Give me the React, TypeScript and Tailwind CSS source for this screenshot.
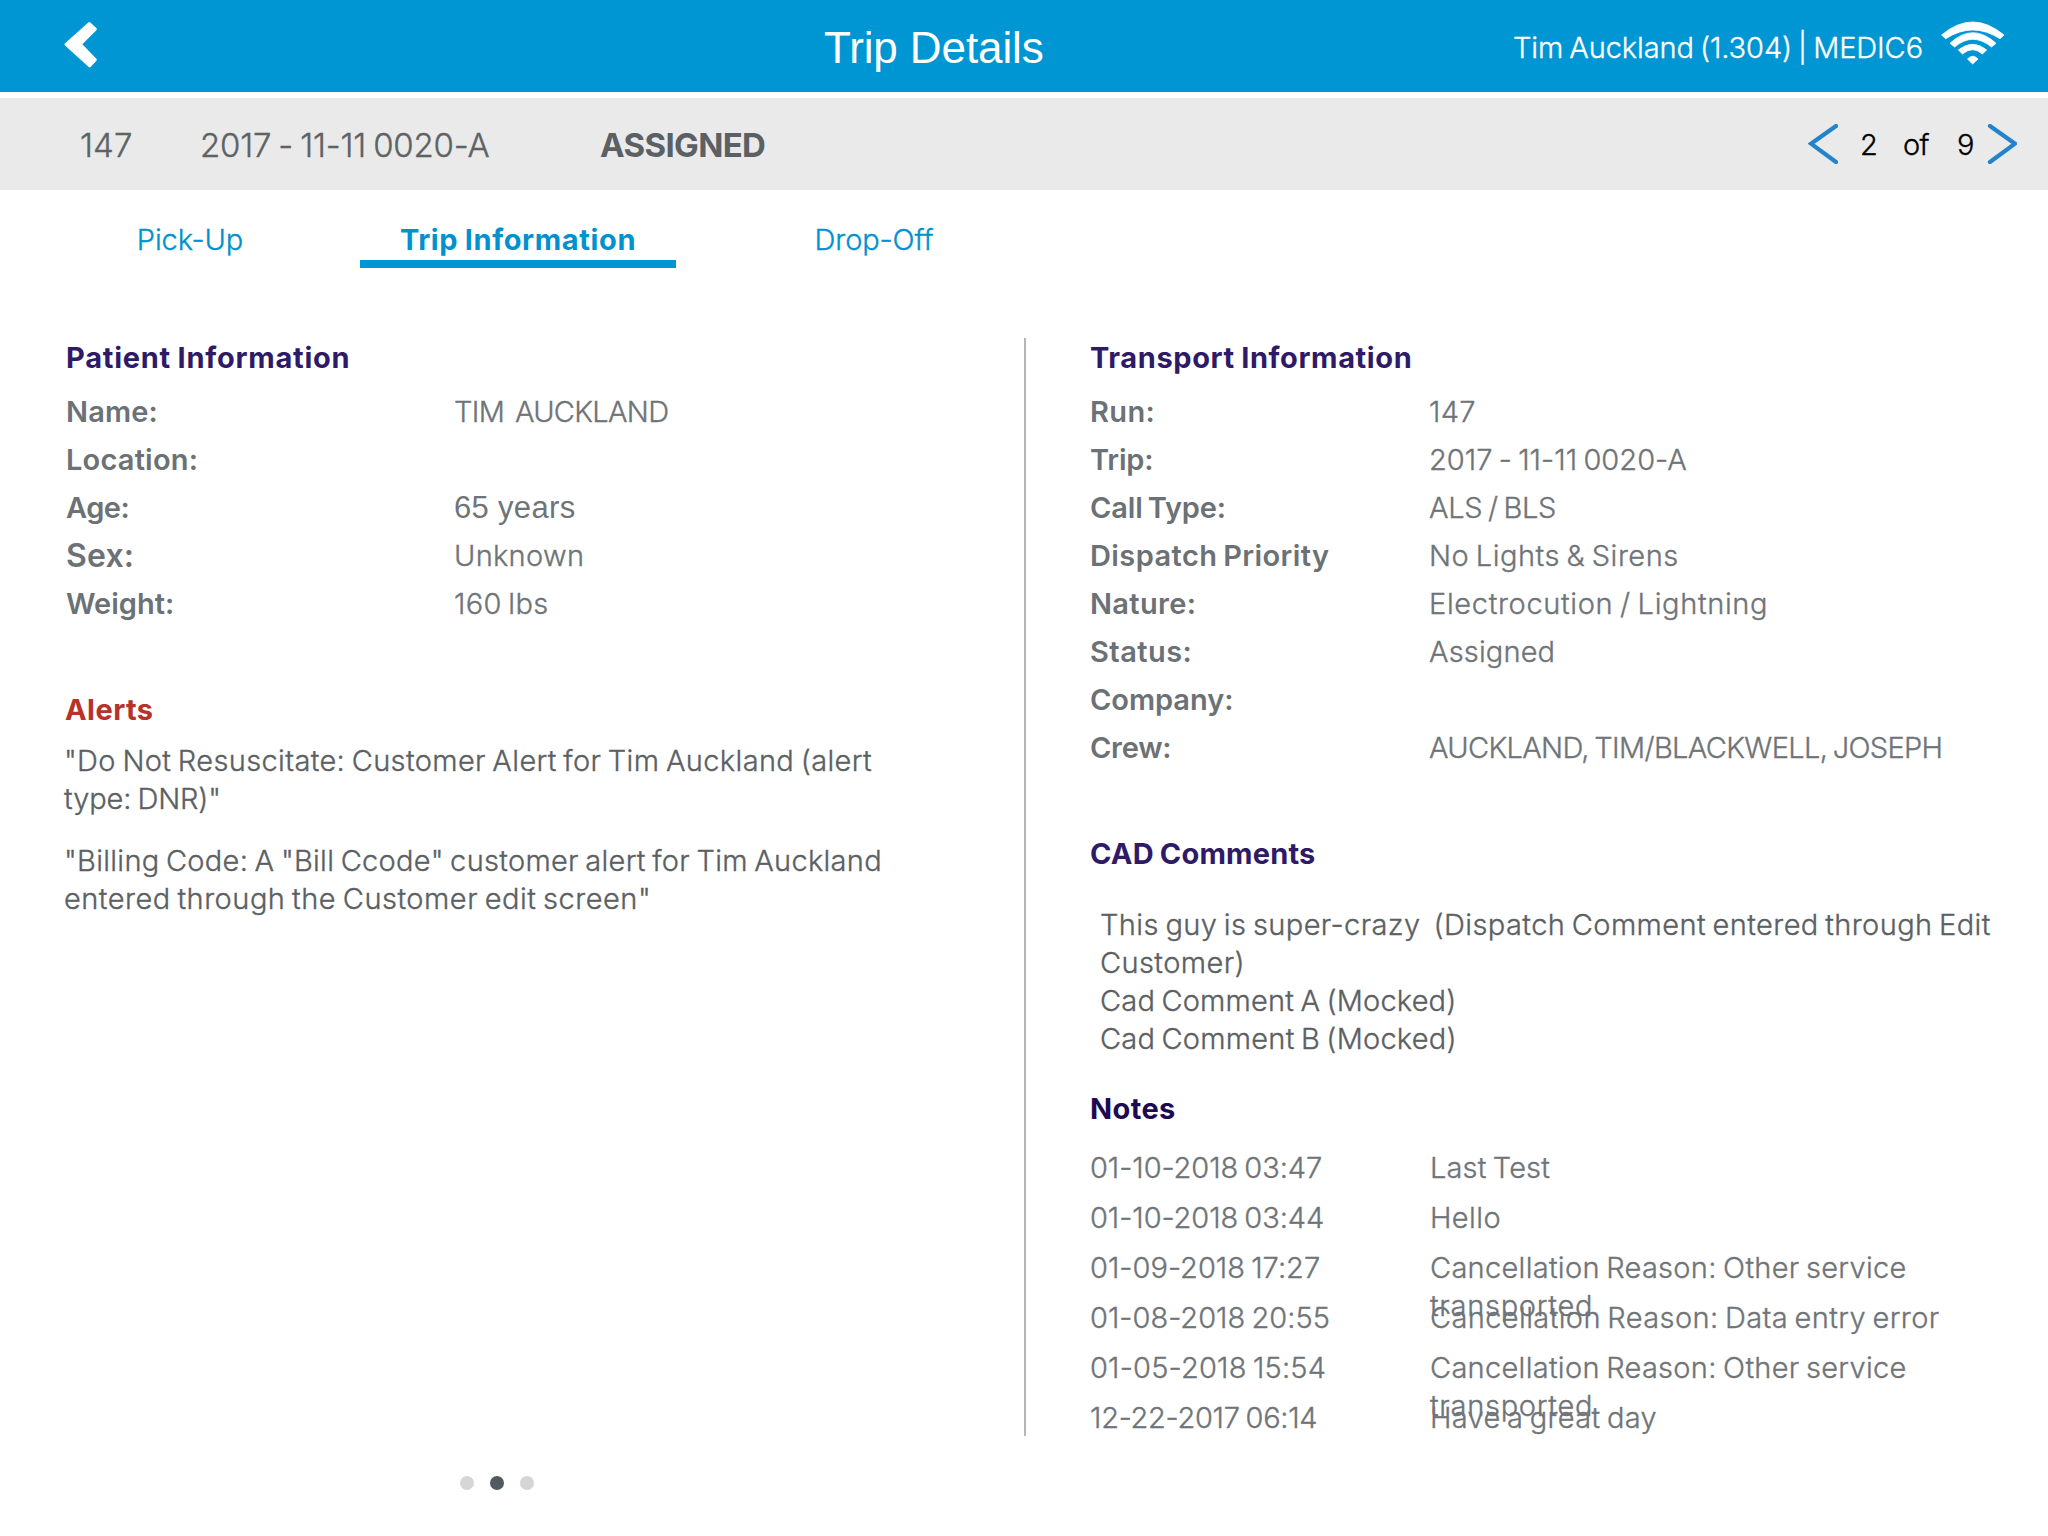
import React from "react";

type Item = { label: string; value?: string; labelClass?: string; valueClass?: string };

const patient: Item[] = [
  { label: "Name:", value: "TIM  AUCKLAND", labelClass: "tracking-[0.15px]", valueClass: "tracking-[-0.7px]" },
  { label: "Location:", labelClass: "tracking-[0.2px]" },
  {
    label: "Age:",
    value: "65 years",
    labelClass: "tracking-[-0.48px]",
    valueClass:
      "font-['Liberation_Sans',sans-serif] text-[31px] font-normal tracking-[0.32px] [word-spacing:0px] [-webkit-text-stroke:0px]",
  },
  { label: "Sex:", value: "Unknown", labelClass: "text-[32px] tracking-[0.2px]", valueClass: "tracking-[0.3px]" },
  { label: "Weight:", value: "160 lbs", valueClass: "tracking-[0.35px]" },
];

const transport: Item[] = [
  { label: "Run:", value: "147", labelClass: "tracking-[0.4px]", valueClass: "tracking-[0.3px]" },
  { label: "Trip:", value: "2017 - 11-11 0020-A", labelClass: "tracking-[-0.2px]", valueClass: "tracking-[0.05px]" },
  { label: "Call Type:", value: "ALS / BLS", labelClass: "tracking-[-0.15px]", valueClass: "tracking-[-0.35px]" },
  { label: "Dispatch Priority", value: "No Lights & Sirens", labelClass: "tracking-[0.42px]", valueClass: "tracking-[0.5px]" },
  { label: "Nature:", value: "Electrocution / Lightning", labelClass: "tracking-[0.35px]", valueClass: "tracking-[0.65px]" },
  { label: "Status:", value: "Assigned", labelClass: "tracking-[0.45px]", valueClass: "tracking-[0.15px]" },
  { label: "Company:", labelClass: "tracking-[-0.05px]" },
  { label: "Crew:", value: "AUCKLAND, TIM/BLACKWELL, JOSEPH", labelClass: "tracking-[-0.25px]", valueClass: "tracking-[-0.67px]" },
];

const alerts = [
  {
    id: "dnr",
    text: "\"Do Not Resuscitate: Customer Alert for Tim Auckland (alert ",
    rest: "type: DNR)\"",
    textClass: "tracking-[0.36px]",
    restClass: "tracking-[-0.1px]",
  },
  {
    id: "billing",
    text: "\"Billing Code: A \"Bill Ccode\" customer alert for Tim Auckland ",
    rest: "entered through the Customer edit screen\"",
    textClass: "tracking-[0.29px]",
    restClass: "tracking-[0.5px]",
  },
];

const notes = [
  { date: "01-10-2018 03:47", text: "Last Test", dateClass: "tracking-[-0.06px]", textClass: "tracking-[0.15px]" },
  { date: "01-10-2018 03:44", text: "Hello", dateClass: "tracking-[-0.06px]", textClass: "tracking-[0.4px]" },
  {
    date: "01-09-2018 17:27",
    text: "Cancellation Reason: Other service ",
    rest: "transported",
    dateClass: "tracking-[0.02px]",
    textClass: "tracking-[0.29px]",
  },
  {
    date: "01-08-2018 20:55",
    text: "Cancellation Reason: Data entry error",
    dateClass: "tracking-[0.02px]",
    textClass: "tracking-[0.38px]",
  },
  {
    date: "01-05-2018 15:54",
    text: "Cancellation Reason: Other service ",
    rest: "transported",
    dateClass: "tracking-[0.2px]",
    textClass: "tracking-[0.29px]",
  },
  { date: "12-22-2017 06:14", text: "Have a great day", dateClass: "tracking-[-0.28px]", textClass: "tracking-[0.32px]" },
];

function BackIcon() {
  return (
    <svg className="ml-[63px] mt-[21px] h-[48px] w-[35px] shrink-0" viewBox="0 0 35 48">
      <path
        d="M26.3 2.5 L32.3 8.2 L17.3 23.3 L32.3 38.8 L26.7 44.8 L3 23.3 Z"
        fill="#fff"
        stroke="#fff"
        strokeWidth="3"
        strokeLinejoin="round"
      />
    </svg>
  );
}

function WifiIcon() {
  return (
    <svg
      className="mt-[21px] h-[44px] w-[64px] shrink-0 overflow-visible"
      viewBox="0 0 64 44"
      fill="#fff"
      stroke="#fff"
      strokeWidth=".8"
      strokeLinejoin="round"
    >
      <path d="M.5 14 Q31.7 -12 63 14 L59 17.7 Q31.7 .3 4.7 17.7 Z" />
      <path d="M9 22.3 Q31.7 1.1 55 22.3 L50.5 26 Q31.7 10.6 13.7 26 Z" />
      <path d="M17.3 29 Q31.7 17.6 45.7 29 L41.3 33 Q31.7 24.4 21.5 33 Z" />
      <path d="M26.5 38 Q31.7 32.5 37 38 L31.7 43 Z" />
    </svg>
  );
}

function PagerArrow({ points }: { points: string }) {
  return (
    <svg className="mt-[26px] h-[40px] w-[30px] shrink-0" viewBox="0 0 30 40">
      <polyline points={points} fill="none" stroke="#2384cc" strokeWidth="4.2" strokeLinecap="round" />
    </svg>
  );
}

function Heading({ children, className }: { children: React.ReactNode; className: string }) {
  return (
    <h2
      className={
        "text-[29px] font-bold leading-[35px] [-webkit-text-stroke:0px] [word-spacing:-1px] " + className
      }
    >
      {children}
    </h2>
  );
}

function Rows({ items, columns }: { items: Item[]; columns: string }) {
  return (
    <dl className="mt-[13px]">
      {items.map((item) => (
        <div key={item.label} className={"grid h-12 items-start whitespace-pre " + columns}>
          <dt
            className={
              "font-semibold leading-[47px] text-[#6b7175] [-webkit-text-stroke:0px] " + (item.labelClass ?? "")
            }
          >
            {item.label}
          </dt>
          <dd className={"leading-[47px] text-[#6f7478] " + (item.valueClass ?? "")}>{item.value}</dd>
        </div>
      ))}
    </dl>
  );
}

export default function App() {
  return (
    <div className="flex h-[1536px] w-[2048px] flex-col overflow-hidden bg-white font-[Inter,sans-serif] text-[29px] font-light [-webkit-text-stroke:0.35px] [word-spacing:-2px]">
      <header className="flex h-[92px] shrink-0 items-start bg-[#0096d3] text-white">
        <BackIcon />
        <h1 className="ml-[726px] mt-[23px] whitespace-nowrap font-['Liberation_Sans',sans-serif] text-[44px] font-normal leading-[49px] tracking-[-0.1px] [-webkit-text-stroke:0px] [word-spacing:0px]">
          Trip Details
        </h1>
        <div className="ml-auto mr-[43px] flex items-start">
          <span className="mr-[18px] mt-[30px] whitespace-nowrap leading-[35px] tracking-[-0.09px]">
            Tim Auckland (1.304) | MEDIC6
          </span>
          <WifiIcon />
        </div>
      </header>

      <section className="mt-[6px] flex h-[92px] shrink-0 items-start bg-[#eaeaea] text-[#5d6265]">
        <span className="ml-[80px] mt-[27px] w-[120px] text-[33px] leading-[40px] tracking-[0.1px]">147</span>
        <span className="mt-[27px] w-[400px] text-[33px] leading-[40px] tracking-[-0.2px]">2017 - 11-11 0020-A</span>
        <span className="mt-[27px] text-[33px] font-bold leading-[40px] tracking-[-0.65px] text-[#5a6064] [-webkit-text-stroke:0px]">
          ASSIGNED
        </span>
        <div className="ml-auto mr-[31px] flex items-start text-black">
          <PagerArrow points="28,2 3,19.7 28,38" />
          <span className="ml-[22px] mt-[29px] w-[43px] leading-[35px]">2</span>
          <span className="mt-[29px] w-[54px] leading-[35px] tracking-[-0.6px]">of</span>
          <span className="mt-[29px] w-[30px] leading-[35px]">9</span>
          <PagerArrow points="3,2 28,19.7 3,38" />
        </div>
      </section>

      <nav className="flex h-[148px] shrink-0 items-start pt-[32px] text-center leading-[35px] text-[#0091d0]">
        <span className="ml-[32px] w-[316px] tracking-[-0.1px]">Pick-Up</span>
        <span className="ml-[12px] w-[316px] border-b-8 border-[#0096d3] pb-[3px] font-bold tracking-[0.62px] [-webkit-text-stroke:0px] [word-spacing:-1px]">
          Trip Information
        </span>
        <span className="ml-[40px] w-[316px] tracking-[-0.1px]">Drop-Off</span>
      </nav>

      <main className="grid h-[1098px] shrink-0 grid-cols-[1024px_1024px] grid-rows-[1098px]">
        <section className="pl-[66px] pt-[2px]">
          <Heading className="tracking-[0.75px] text-[#2e1a66]">Patient Information</Heading>
          <Rows items={patient} columns="grid-cols-[388px_1fr]" />
          <Heading className="-ml-px mt-[64px] tracking-[0.45px] text-[#b5332a]">Alerts</Heading>
          <div className="-ml-[2px] mt-[15px] flex w-[830px] flex-col gap-[23.5px] leading-[38.25px] text-[#5b6063]">
            {alerts.map((alert) => (
              <p key={alert.id} className={alert.textClass}>
                {alert.text}
                <span className={alert.restClass}>{alert.rest}</span>
              </p>
            ))}
          </div>
        </section>

        <section className="border-l-2 border-[#b4b6b8] pl-[64px] pt-[2px]">
          <Heading className="tracking-[0.6px] text-[#2e1a66]">Transport Information</Heading>
          <Rows items={transport} columns="grid-cols-[339px_1fr]" />

          <Heading className="mt-[64px] tracking-[0.18px] text-[#2e1a66]">CAD Comments</Heading>
          <div className="ml-[10px] mt-[34.5px] w-[925px] whitespace-pre-wrap leading-[38.25px] text-[#5b6063]">
            <p className="tracking-[0.4px]">
              {"This guy is super-crazy  (Dispatch Comment entered through Edit Customer)"}
            </p>
            <p className="tracking-[0.18px]">Cad Comment A (Mocked)</p>
            <p className="tracking-[0.22px]">Cad Comment B (Mocked)</p>
          </div>

          <Heading className="mt-[32.5px] tracking-[0.4px] text-[#1d0a52]">Notes</Heading>
          <ul className="mt-[24px] text-[#6f7478]">
            {notes.map((note) => (
              <li key={note.date} className="grid h-[50px] grid-cols-[340px_560px] items-start">
                <span className={"leading-[35px] " + note.dateClass}>{note.date}</span>
                <span className={"-mt-px leading-[38.25px] " + note.textClass}>
                  {note.text}
                  {note.rest && <span className="tracking-[0.72px]">{note.rest}</span>}
                </span>
              </li>
            ))}
          </ul>
        </section>
      </main>

      <div className="ml-[460px] mt-10 flex gap-4">
        <span className="size-3.5 rounded-full bg-[#d6d6d6]" />
        <span className="size-3.5 rounded-full bg-[#515b5f]" />
        <span className="size-3.5 rounded-full bg-[#d6d4d6]" />
      </div>
    </div>
  );
}
